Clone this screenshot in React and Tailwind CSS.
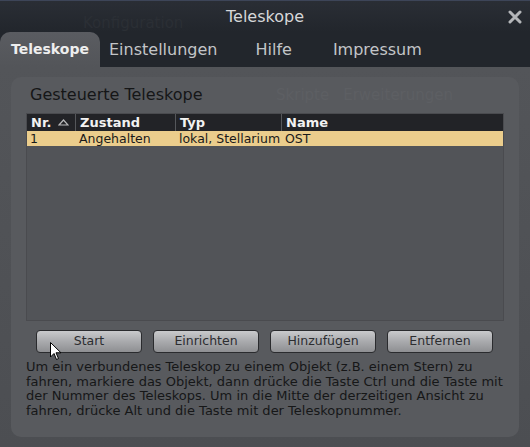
const rows = [
  { nr: "1", zustand: "Angehalten", typ: "lokal, Stellarium", name: "OST" },
];

const Button = ({ children }) => (
  <button className="h-[23px] w-[106px] rounded-[4px] border border-[#2a2b2e] bg-[linear-gradient(180deg,#c9cacc_0%,#a9aaad_50%,#8e8f92_100%)] text-[12.5px] leading-none text-[#2c2d30]">
    {children}
  </button>
);

export default function App() {
  return (
    <div
      className="relative flex h-[447px] w-[530px] flex-col overflow-hidden bg-[#4c4e52] text-[13px]"
      style={{ fontFamily: '"DejaVu Sans", sans-serif' }}
    >
      {/* title bar */}
      <div className="relative flex h-[32px] items-center justify-center border-t border-[#3d4558] bg-[linear-gradient(180deg,#2a2e35_0%,#22262c_100%)]">
        <span className="absolute left-[83px] top-[11px] text-[15px] text-[#2b2f35]">Konfiguration</span>
        <span className="relative text-[16px] text-[#d6d7d9]">Teleskope</span>
        <svg className="absolute right-[8px] top-[9px]" width="14" height="14" viewBox="0 0 14 14">
          <path d="M2 2 L12 12 M12 2 L2 12" stroke="#b4b6b9" strokeWidth="3" strokeLinecap="round" />
        </svg>
      </div>

      {/* tabs */}
      <div className="flex h-[35px] items-stretch bg-[#22262c] text-[16px]">
        <div className="flex w-[100px] items-center justify-center rounded-t-[10px] bg-[linear-gradient(180deg,#5a5c61_0%,#535559_100%)] text-[14px] font-bold text-[#eeeeee]">
          Teleskope
        </div>
        <div className="flex items-center pl-[9px] text-[#c3c5c8]">Einstellungen</div>
        <div className="flex items-center pl-[38px] text-[#c3c5c8]">Hilfe</div>
        <div className="flex items-center pl-[41px] text-[#c3c5c8]">Impressum</div>
      </div>

      {/* body */}
      <div className="flex-1 bg-[linear-gradient(180deg,#535559_0%,#4c4e52_100%)] px-[11px] pb-[10px] pt-[10px]">
        <div className="relative flex h-full flex-col rounded-[10px] bg-[#585a5e] px-[15px] pt-[6px]">
          {/* faint window behind */}
          <div className="pointer-events-none absolute left-[265px] top-[7px] flex gap-[14px] text-[15px] text-[#5d5f63]">
            <span>Skripte</span>
            <span>Erweiterungen</span>
          </div>

          <div className="relative pl-[4px] text-[16px] text-[#151617]">Gesteuerte Teleskope</div>

          <div className="relative mt-[6px] h-[208px] border border-[#4a4b4f] bg-[#525458]">
            <div className="flex h-[17px] bg-[#222327] text-[13px] font-bold leading-[17px] text-[#f2f2f2]">
              <div className="flex w-[49px] items-center gap-[7px] border-r border-[#55575b] pl-[4px]">
                Nr.
                <svg width="11" height="7" viewBox="0 0 11 7">
                  <path d="M1 6 L5.5 1 L10 6 Z" fill="none" stroke="#b8b9bb" strokeWidth="1.2" />
                </svg>
              </div>
              <div className="w-[100px] border-r border-[#55575b] pl-[4px]">Zustand</div>
              <div className="w-[106px] border-r border-[#55575b] pl-[4px]">Typ</div>
              <div className="flex-1 pl-[4px]">Name</div>
            </div>
            {rows.map((r) => (
              <div key={r.nr} className="flex h-[15px] whitespace-nowrap bg-[#ebcd8c] text-[12.5px] leading-[15px] text-[#1a1a1a]">
                <div className="w-[49px] overflow-hidden pl-[3px]">{r.nr}</div>
                <div className="w-[100px] overflow-hidden pl-[3px]">{r.zustand}</div>
                <div className="w-[106px] overflow-hidden pl-[3px]">{r.typ}</div>
                <div className="flex-1 overflow-hidden pl-[3px]">{r.name}</div>
              </div>
            ))}
          </div>

          <div className="relative mt-[9px] flex gap-[11px] pl-[10px]">
            <Button>Start</Button>
            <Button>Einrichten</Button>
            <Button>Hinzufügen</Button>
            <Button>Entfernen</Button>
          </div>

          <p className="relative mt-[7px] text-[13px] leading-[14.5px] text-[#161718]">
            Um ein verbundenes Teleskop zu einem Objekt (z.B. einem Stern) zu fahren, markiere das Objekt, dann drücke die Taste Ctrl und die Taste mit der Nummer des Teleskops. Um in die Mitte der derzeitigen Ansicht zu fahren, drücke Alt und die Taste mit der Teleskopnummer.
          </p>
        </div>
      </div>

      {/* mouse cursor */}
      <svg className="absolute left-[50px] top-[342px]" width="12" height="19" viewBox="0 0 12 19">
        <path d="M0.5 0.5 L0.5 15 L4 11.5 L6.5 17.5 L8.5 16.5 L6 10.8 L11 10.8 Z" fill="#ffffff" stroke="#000000" strokeWidth="1" />
      </svg>
    </div>
  );
}
